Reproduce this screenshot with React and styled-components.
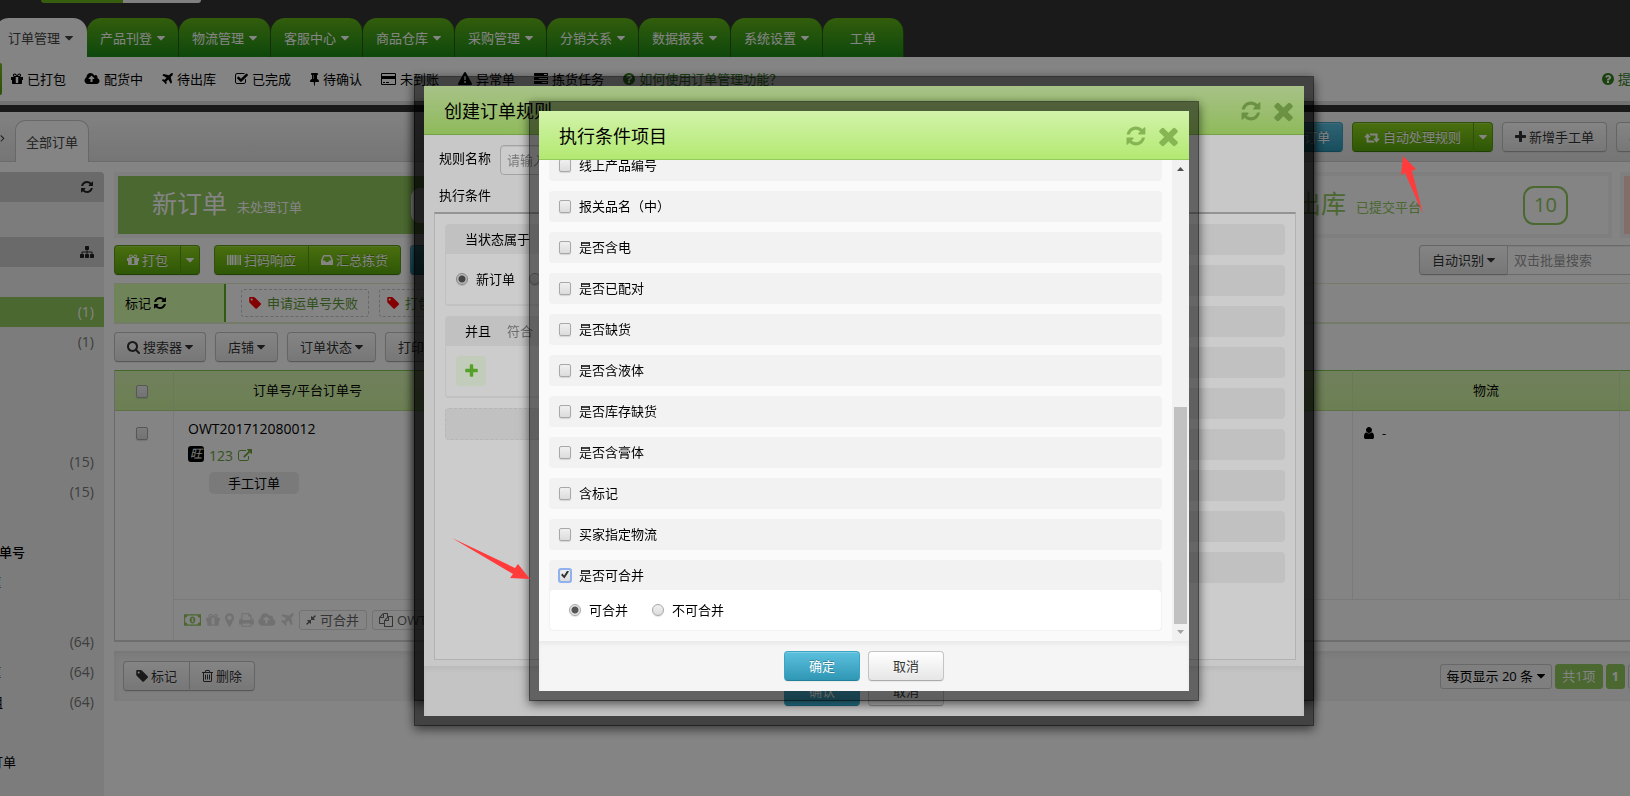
import React, { useState } from "react";
import styled, { createGlobalStyle, css } from 'styled-components';

// [left edge, advance width, path] on a 1792 high grid
const ICONS = {
  refresh: [128, 1536, "M1511 1056q0 5-1 7-64 268-268 434.5t-478 166.5q-146 0-282.5-55t-243.5-157l-129 129q-19 19-45 19t-45-19-19-45v-448q0-26 19-45t45-19h448q26 0 45 19t19 45-19 45l-137 137q71 66 161 102t187 36q134 0 250-65t186-179q11-17 53-117 8-23 30-23h192q13 0 22.5 9.5t9.5 22.5zm25-800v448q0 26-19 45t-45 19h-448q-26 0-45-19t-19-45 19-45l138-138q-148-137-349-137-134 0-250 65t-186 179q-11 17-53 117-8 23-30 23h-199q-13 0-22.5-9.5t-9.5-22.5v-7q65-268 270-434.5t480-166.5q146 0 284 55.5t245 156.5l130-129q19-19 45-19t45 19 19 45z"],
  times: [302, 1188, "M1490 1322q0 40-28 68l-136 136q-28 28-68 28t-68-28l-294-294-294 294q-28 28-68 28t-68-28l-136-136q-28-28-28-68t28-68l294-294-294-294q-28-28-28-68t28-68l136-136q28-28 68-28t68 28l294 294 294-294q28-28 68-28t68 28l136 136q28 28 28 68t-28 68l-294 294 294 294q28 28 28 68z"],
  plus: [192, 1408, "M1600 736v192q0 40-28 68t-68 28h-416v416q0 40-28 68t-68 28h-192q-40 0-68-28t-28-68v-416h-416q-40 0-68-28t-28-68v-192q0-40 28-68t68-28h416v-416q0-40 28-68t68-28h192q40 0 68 28t28 68v416h416q40 0 68 28t28 68z"],
  tag: [100, 1544, "M576 448q0-53-37.5-90.5t-90.5-37.5-90.5 37.5-37.5 90.5 37.5 90.5 90.5 37.5 90.5-37.5 37.5-90.5zm1067 576q0 53-37 90l-491 492q-39 37-91 37-53 0-90-37l-715-716q-38-37-64.5-101t-26.5-117v-416q0-52 38-90t90-38h416q53 0 117 26.5t102 64.5l715 714q37 39 37 91z"],
  caret: [384, 1024, "M1408 704q0 26-19 45l-448 448q-19 19-45 19t-45-19l-448-448q-19-19-19-45t19-45 45-19h896q26 0 45 19t19 45z"],
  cloud: [0, 1920, "M1216 864q0-14-9-23l-352-352q-9-9-23-9t-23 9l-351 351q-10 12-10 24 0 14 9 23t23 9h224v352q0 13 9.5 22.5t22.5 9.5h192q13 0 22.5-9.5t9.5-22.5v-352h224q13 0 22.5-9.5t9.5-22.5zm640 288q0 159-112.5 271.5t-271.5 112.5h-1088q-185 0-316.5-131.5t-131.5-316.5q0-130 70-240t188-165q-2-30-2-43 0-212 150-362t362-150q156 0 285.5 87t188.5 231q71-62 166-62 106 0 181 75t75 181q0 76-41 138 130 31 213.5 135.5t83.5 238.5z"],
  plane: [192, 1408, "M1568 160q44 52 12 148t-108 172l-161 161 160 696q5 19-12 33l-128 96q-7 6-19 6-4 0-7-1-15-3-21-16l-279-508-259 259 53 194q5 17-8 31l-96 96q-9 9-23 9h-2q-15-2-24-13l-189-252-252-189q-11-7-13-23-1-13 9-25l96-97q9-9 23-9 6 0 8 1l194 53 259-259-508-279q-14-8-17-24-2-16 9-27l128-128q14-13 30-8l665 159 160-160q76-76 172-108t148 12z"],
  pin: [320, 1152, "M800 864v-448q0-14-9-23t-23-9-23 9-9 23v448q0 14 9 23t23 9 23-9 9-23zm672 352q0 26-19 45t-45 19h-429l-51 483q-2 12-10.5 20.5t-20.5 8.5h-1q-27 0-32-27l-76-485h-404q-26 0-45-19t-19-45q0-123 78.5-221.5t177.5-98.5v-512q-52 0-90-38t-38-90 38-90 90-38h640q52 0 90 38t38 90-38 90-90 38v512q99 0 177.5 98.5t78.5 221.5z"],
  check: [64, 1664, "M1472 930v318q0 119-84.5 203.5t-203.5 84.5h-832q-119 0-203.5-84.5t-84.5-203.5v-832q0-119 84.5-203.5t203.5-84.5h832q63 0 117 25 15 7 18 23 3 17-9 29l-49 49q-10 10-23 10-3 0-9-2-23-6-45-6h-832q-66 0-113 47t-47 113v832q0 66 47 113t113 47h832q66 0 113-47t47-113v-254q0-13 9-22l64-64q10-10 23-10 6 0 12 3 20 8 20 29zm231-489l-814 814q-24 24-57 24t-57-24l-430-430q-24-24-24-57t24-57l110-110q24-24 57-24t57 24l263 263 647-647q24-24 57-24t57 24l110 110q24 24 24 57t-24 57z"],
  card: [0, 1920, "M1760 128q66 0 113 47t47 113v1216q0 66-47 113t-113 47h-1600q-66 0-113-47t-47-113v-1216q0-66 47-113t113-47h1600zm-1600 128q-13 0-22.5 9.5t-9.5 22.5v224h1664v-224q0-13-9.5-22.5t-22.5-9.5h-1600zm1600 1280q13 0 22.5-9.5t9.5-22.5v-608h-1664v608q0 13 9.5 22.5t22.5 9.5h1600zm-1504-128v-128h256v128h-256zm384 0v-128h384v128h-384z"],
  warning: [0, 1792, "M1024 1375v-190q0-14-9.5-23.5t-22.5-9.5h-192q-13 0-22.5 9.5t-9.5 23.5v190q0 14 9.5 23.5t22.5 9.5h192q13 0 22.5-9.5t9.5-23.5zm-2-374l18-459q0-12-10-19-13-11-24-11h-220q-11 0-24 11-10 7-10 21l17 457q0 10 10 16.5t24 6.5h185q14 0 23.5-6.5t10.5-16.5zm-14-934l768 1408q35 63-2 126-17 29-46.5 46t-63.5 17h-1536q-34 0-63.5-17t-46.5-46q-37-63-2-126l768-1408q17-31 47-49t65-18 65 18 47 49z"],
  tasks: [0, 1792, "M1024 1408h640v-128h-640v128zm-384-512h1024v-128h-1024v128zm640-512h384v-128h-384v128zm512 832v256q0 26-19 45t-45 19h-1664q-26 0-45-19t-19-45v-256q0-26 19-45t45-19h1664q26 0 45 19t19 45zm0-512v256q0 26-19 45t-45 19h-1664q-26 0-45-19t-19-45v-256q0-26 19-45t45-19h1664q26 0 45 19t19 45zm0-512v256q0 26-19 45t-45 19h-1664q-26 0-45-19t-19-45v-256q0-26 19-45t45-19h1664q26 0 45 19t19 45z"],
  question: [128, 1536, "M1024 1376v-192q0-14-9-23t-23-9h-192q-14 0-23 9t-9 23v192q0 14 9 23t23 9h192q14 0 23-9t9-23zm256-672q0-88-55.5-163t-138.5-116-170-41q-243 0-371 213-15 24 8 42l132 100q7 6 19 6 16 0 25-12 53-68 86-92 34-24 86-24 48 0 85.5 26t37.5 59q0 38-20 61t-68 45q-63 28-115.5 86.5t-52.5 125.5v36q0 14 9 23t23 9h192q14 0 23-9t9-23q0-19 21.5-49.5t54.5-49.5q32-18 49-28.5t46-35 44.5-48 28-60.5 12.5-81zm384 192q0 209-103 385.5t-279.5 279.5-385.5 103-385.5-103-279.5-279.5-103-385.5 103-385.5 279.5-279.5 385.5-103 385.5 103 279.5 279.5 103 385.5z"],
  gift: [128, 1536, "M1056 1356v-716h-320v716q0 25 18 38.5t46 13.5h192q28 0 46-13.5t18-38.5zm-456-844h195l-126-161q-26-31-69-31-40 0-68 28t-28 68 28 68 68 28zm688-96q0-40-28-68t-68-28q-43 0-69 31l-125 161h194q40 0 68-28t28-68zm376 256v320q0 14-9 23t-23 9h-96v416q0 40-28 68t-68 28h-1088q-40 0-68-28t-28-68v-416h-96q-14 0-23-9t-9-23v-320q0-14 9-23t23-9h440q-93 0-158.5-65.5t-65.5-158.5 65.5-158.5 158.5-65.5q107 0 168 77l128 165 128-165q61-77 168-77 93 0 158.5 65.5t65.5 158.5-65.5 158.5-158.5 65.5h440q14 0 23 9t9 23z"],
  retweet: [0, 1920, "M1216 1568q0 13-9.5 22.5t-22.5 9.5h-960q-8 0-13.5-2t-9-7-5.5-8-3-11.5-1-11.5v-600h-192q-26 0-45-19t-19-45q0-24 15-41l320-384q19-22 49-22t49 22l320 384q15 17 15 41 0 26-19 45t-45 19h-192v384h576q16 0 25 11l160 192q7 10 7 21zm640-416q0 24-15 41l-320 384q-20 23-49 23t-49-23l-320-384q-15-17-15-41 0-26 19-45t45-19h192v-384h-576q-16 0-25-12l-160-192q-7-9-7-20 0-13 9.5-22.5t22.5-9.5h960q8 0 13.5 2t9 7 5.5 8 3 11.5 1 11.5v600h192q26 0 45 19t19 45z"],
  search: [64, 1664, "M1216 832q0-185-131.5-316.5t-316.5-131.5-316.5 131.5-131.5 316.5 131.5 316.5 316.5 131.5 316.5-131.5 131.5-316.5zm512 832q0 52-38 90t-90 38q-54 0-90-38l-343-342q-179 124-399 124-143 0-273.5-55.5t-225-150-150-225-55.5-273.5 55.5-273.5 150-225 225-150 273.5-55.5 273.5 55.5 225 150 150 225 55.5 273.5q0 220-124 399l343 343q37 37 37 90z"],
  sitemap: [0, 1792, "M1792 1248v320q0 40-28 68t-68 28h-320q-40 0-68-28t-28-68v-320q0-40 28-68t68-28h96v-192h-512v192h96q40 0 68 28t28 68v320q0 40-28 68t-68 28h-320q-40 0-68-28t-28-68v-320q0-40 28-68t68-28h96v-192h-512v192h96q40 0 68 28t28 68v320q0 40-28 68t-68 28h-320q-40 0-68-28t-28-68v-320q0-40 28-68t68-28h96v-192q0-52 38-90t90-38h512v-192h-96q-40 0-68-28t-28-68v-320q0-40 28-68t68-28h320q40 0 68 28t28 68v320q0 40-28 68t-68 28h-96v192h512q52 0 90 38t38 90v192h96q40 0 68 28t28 68z"],
  user: [256, 1280, "M1536 1399q0 109-62.5 187t-150.5 78h-854q-88 0-150.5-78t-62.5-187q0-85 8.5-160.5t31.5-152 58.5-131 94-89 134.5-34.5q131 128 313 128t313-128q76 0 134.5 34.5t94 89 58.5 131 31.5 152 8.5 160.5zm-256-887q0 159-112.5 271.5t-271.5 112.5-271.5-112.5-112.5-271.5 112.5-271.5 271.5-112.5 271.5 112.5 112.5 271.5z"],
  marker: [384, 1024, "M1152 640q0-106-75-181t-181-75-181 75-75 181 75 181 181 75 181-75 75-181zm256 0q0 109-33 179l-364 774q-16 33-47.5 52t-67.5 19-67.5-19-46.5-52l-365-774q-33-70-33-179 0-212 150-362t362-150 362 150 150 362z"],
  print: [64, 1664, "M448 1536h896v-256h-896v256zm0-640h896v-384h-160q-40 0-68-28t-28-68v-160h-640v640zm1152 64q0-26-19-45t-45-19-45 19-19 45 19 45 45 19 45-19 19-45zm128 0v416q0 13-9.5 22.5t-22.5 9.5h-224v160q0 40-28 68t-68 28h-960q-40 0-68-28t-28-68v-160h-224q-13 0-22.5-9.5t-9.5-22.5v-416q0-79 56.5-135.5t135.5-56.5h64v-544q0-40 28-68t68-28h672q40 0 88 20t76 48l152 152q28 28 48 76t20 88v256h64q79 0 135.5 56.5t56.5 135.5z"],
  trash: [192, 1408, "M704 736v576q0 14-9 23t-23 9h-64q-14 0-23-9t-9-23v-576q0-14 9-23t23-9h64q14 0 23 9t9 23zm256 0v576q0 14-9 23t-23 9h-64q-14 0-23-9t-9-23v-576q0-14 9-23t23-9h64q14 0 23 9t9 23zm256 0v576q0 14-9 23t-23 9h-64q-14 0-23-9t-9-23v-576q0-14 9-23t23-9h64q14 0 23 9t9 23zm128 724v-948h-896v948q0 22 7 40.5t14.5 27 10.5 8.5h832q3 0 10.5-8.5t14.5-27 7-40.5zm-672-1076h448l-48-117q-7-9-17-11h-317q-10 2-17 11zm928 32v64q0 14-9 23t-23 9h-96v948q0 83-47 143.5t-113 60.5h-832q-66 0-113-58.5t-47-141.5v-952h-96q-14 0-23-9t-9-23v-64q0-14 9-23t23-9h309l70-167q15-37 54-63t79-26h320q40 0 79 26t54 63l70 167h309q14 0 23 9t9 23z"],
  external: [0, 1792, "M1408 928v320q0 119-84.5 203.5t-203.5 84.5h-832q-119 0-203.5-84.5t-84.5-203.5v-832q0-119 84.5-203.5t203.5-84.5h704q14 0 23 9t9 23v64q0 14-9 23t-23 9h-704q-66 0-113 47t-47 113v832q0 66 47 113t113 47h832q66 0 113-47t47-113v-320q0-14 9-23t23-9h64q14 0 23 9t9 23zm384-864v512q0 26-19 45t-45 19-45-19l-176-176-652 652q-10 10-23 10t-23-10l-114-114q-10-10-10-23t10-23l652-652-176-176q-19-19-19-45t19-45 45-19h512q26 0 45 19t19 45z"],
  inbox: [128, 1536, "M1151 960h316q-1-3-2.5-8.5t-2.5-7.5l-212-496h-708l-212 496q-1 3-2.5 8.500t-2.500 7.500h316l95 192h320zm513 30v482q0 26-19 45t-45 19h-1408q-26 0-45-19t-19-45v-482q0-62 25-123l238-552q10-25 36.5-42t52.5-17h832q26 0 52.5 17t36.5 42l238 552q25 61 25 123z"],
  compress: [128, 1536, "M896 960v448q0 26-19 45t-45 19-45-19l-144-144-332 332q-10 10-23 10t-23-10l-114-114q-10-10-10-23t10-23l332-332-144-144q-19-19-19-45t19-45 45-19h448q26 0 45 19t19 45zm755-672q0 13-10 23l-332 332 144 144q19 19 19 45t-19 45-45 19h-448q-26 0-45-19t-19-45v-448q0-26 19-45t45-19 45 19l144 144 332-332q10-10 23-10t23 10l114 114q10 10 10 23z"],
  files: [0, 1792, "M1696 384q40 0 68 28t28 68v1216q0 40-28 68t-68 28h-960q-40 0-68-28t-28-68v-288h-544q-40 0-68-28t-28-68v-672q0-40 20-88t48-76l408-408q28-28 76-48t88-20h416q40 0 68 28t28 68v328q68-40 128-40h416zm-544 213l-299 299h299v-299zm-640-384l-299 299h299v-299zm196 647l316-316v-416h-384v416q0 40-28 68t-68 28h-416v640h512v-256q0-40 20-88t48-76zm956 804v-1152h-384v416q0 40-28 68t-68 28h-416v640h896z"],
  barcode: [0, 1792, "M0 256h128v1280H0zM192 256h128v1280h-128zM384 256h128v1280h-128zM576 256h192v1280H576zM832 256h128v1280H832zM1024 256h128v1280h-128zM1216 256h128v1280h-128zM1408 256h64v1280h-64zM1536 256h64v1280h-64zM1664 256h128v1280h-128z"],
  money: [0, 1920, "M0 256h1920v1280H0zM384 384q0 106-75 181t-181 75v512q106 0 181 75t75 181h1152q0-106 75-181t181-75V640q-106 0-181-75t-75-181zM960 512q140 0 230 112t90 272-90 272-230 112-230-112-90-272 90-272 230-112zM840 1088h272V992h-80V672h-88q-20 50-104 56v78h80v186h-80z"],
  chevron: [500, 780, "M1171 960q0 13-10 23l-466 466q-10 10-23 10t-23-10l-50-50q-10-10-10-23t10-23l393-393-393-393q-10-10-10-23t10-23l50-50q10-10 23-10t23 10l466 466q10 10 10 23z"],
};

function Icon({ name, size = 14 }) {
  const [x, w, d] = ICONS[name];
  return (
    <Svg
      width={Math.round(size * w / 1792)}
      height={size}
      viewBox={`${x} 0 ${w} 1792`}
      aria-hidden="true">
      <path d={d} fillRule="evenodd" />
    </Svg>
  );
}

const GlobalStyle = createGlobalStyle`
  * { box-sizing: border-box; }
  body {
    margin: 0;
    background: #fdfdfd;
    color: #000;
    font: 13px/20px "Open Sans", "Noto Sans CJK SC", sans-serif;
  }
  button, input, select { font: inherit; }
`;

const Svg = styled.svg`
  display: block;
  flex: none;
  fill: currentColor;
  overflow: visible;
`;

const Shell = styled.div`
  height: 100vh;
  overflow: hidden;
`;
const Page = styled.div`
  display: flex;
  flex-direction: column;
  width: calc(100% + 40px);
  min-height: 100vh;
`;

/* ---------- top navigation ---------- */
const TopBar = styled.header`
  height: 57px;
  background: #333;
  display: flex;
  flex-direction: column;
  justify-content: space-between;
`;
const Switcher = styled.div`
  display: flex;
  margin-left: 41px;
  height: 3px;
  width: 160px;
  border-radius: 0 0 5px 5px;
  overflow: hidden;
  background: linear-gradient(90deg, #6ab41e 82px, #f8f8f8 82px);
`;
const Tabs = styled.nav`
  display: flex;
  margin-left: -5px;
`;
const Tab = styled.a`
  display: flex;
  align-items: center;
  justify-content: center;
  gap: 5px;
  height: 39px;
  width: ${p => p.$plain ? '81px' : '92px'};
  border-radius: 14px 14px 0 0;
  border-right: 1px solid ${p => p.$active ? 'transparent' : '#2a5a14'};
  background: ${p => p.$active ? '#fdfdfd' : 'linear-gradient(#62b41a, #1b8a18)'};
  color: ${p => p.$active ? '#444' : '#fff'};
  text-decoration: none;
`;
const SubNav = styled.nav`
  display: flex;
  align-items: center;
  gap: 19px;
  height: 48px;
  padding-right: 40px;
  background: #fdfdfd;
  border-bottom: 4px solid #dedede;
`;
const SubLink = styled.a`
  display: flex;
  align-items: center;
  gap: 4px;
  color: ${p => p.$green ? '#33801c' : '#000'};
  text-decoration: none;
  white-space: nowrap;
`;
const HelpLink = styled(SubLink)`
  margin-left: auto;
  margin-right: -14px;
`;
const SubActive = styled.span`
  width: 2px;
  height: 32px;
  margin-right: -10px;
  border-radius: 0 4px 4px 0;
  background: linear-gradient(#7ab81e, #5c9c12);
`;
const Rule = styled.div`
  height: 7px;
  background: #343434;
`;
const DocBar = styled.div`
  display: flex;
  align-items: flex-end;
  height: 50px;
  border-bottom: 1px solid #cfcfcf;
  background: linear-gradient(#fafafa, #e2e2e2);
`;
const Back = styled.button`
  display: flex;
  align-items: center;
  width: 15px;
  height: 46px;
  padding: 0;
  border: 0;
  background: none;
  color: #222;
`;
const DocTab = styled.a`
  height: 42px;
  margin-bottom: -1px;
  padding: 11px 10px 0;
  border: 1px solid #c8c8c8;
  border-bottom: 0;
  border-radius: 10px 10px 0 0;
  background: #fdfdfd;
  color: #444;
  text-decoration: none;
`;
const DocActions = styled.div`
  display: flex;
  gap: 9px;
  margin: 0 2px 9px auto;
`;

/* ---------- buttons ---------- */
const tones = {
  plain: css`
    color: #333;
    border-color: #c4c4c4 #c4c4c4 #ababab;
    background: linear-gradient(#fff, #e6e6e6);
    text-shadow: 0 1px 1px rgba(255, 255, 255, .75);
  `,
  green: css`
    color: #fff;
    border-color: #5a9a10 #5a9a10 #3f7a08;
    background: linear-gradient(#8fd61f, #5aa80c);
    text-shadow: 0 -1px 0 rgba(0, 0, 0, .25);
  `,
  blue: css`
    color: #fff;
    border-color: #3ba4c4 #3ba4c4 #23809c;
    background: linear-gradient(#5bc0de, #2f96b4);
    text-shadow: 0 -1px 0 rgba(0, 0, 0, .25);
  `,
};
const Button = styled.button`
  display: flex;
  align-items: center;
  justify-content: center;
  gap: 3px;
  flex: none;
  height: 30px;
  min-width: ${p => p.$wide ? '76px' : '0'};
  padding: 0 ${p => p.$slim ? '5px' : '12px'};
  border: 1px solid;
  border-radius: 4px;
  box-shadow: inset 0 1px 0 rgba(255, 255, 255, .2), 0 1px 1px rgba(0, 0, 0, .05);
  white-space: nowrap;
  ${p => tones[p.$tone || 'plain']}
`;
const ButtonGroup = styled.div`
  display: flex;
  flex: none;
  ${Button}:not(:first-child) {
    border-top-left-radius: 0;
    border-bottom-left-radius: 0;
    margin-left: -1px;
  }
  ${Button}:not(:last-child) {
    border-top-right-radius: 0;
    border-bottom-right-radius: 0;
  }
  & + & {
    margin-left: 5px;
  }
`;

const boxLook = css`
  appearance: none;
  flex: none;
  width: 12px;
  height: 13px;
  margin: 0;
  border: 1px solid #a8a8a8;
  background: linear-gradient(#f0f0f0, #dcdcdc);
  box-shadow: 0 1px 1px rgba(0, 0, 0, .12);
`;
const Check = styled.input.attrs({ type: 'checkbox' })`
  ${boxLook}
  position: relative;
  border-radius: 2px;
  &:checked {
    outline: 2px solid #8fb1ee;
    outline-offset: -1px;
  }
  &:checked::after {
    content: '';
    position: absolute;
    inset: 1px 1px 2px;
    background: #333;
    clip-path: polygon(0 55%, 20% 38%, 38% 62%, 78% 0, 100% 14%, 42% 100%);
  }
`;
const Radio = styled.input.attrs({ type: 'radio' })`
  ${boxLook}
  height: 12px;
  border-radius: 50%;
  &:checked {
    background: radial-gradient(circle, #555 0 3px, #e6e6e6 4px);
  }
`;

/* ---------- main area ---------- */
const Main = styled.div`
  display: flex;
  flex: 1;
  gap: 10px;
  padding-top: 10px;
`;
const Sidebar = styled.aside`
  flex: none;
  width: 104px;
  background: #efefef;
  border-top-right-radius: 4px;
  overflow: hidden;
`;
const SideHead = styled.div`
  display: flex;
  align-items: center;
  justify-content: flex-end;
  height: 30px;
  margin-bottom: ${p => p.$gap};
  padding-right: 10px;
  background: #cdcdcd;
  color: #222;
`;
const SideRow = styled.a`
  display: flex;
  align-items: center;
  justify-content: space-between;
  height: 30px;
  padding-right: 10px;
  font-size: 14px;
  color: ${p => p.$active ? '#fff' : '#777'};
  background: ${p => p.$active ? '#90c85c' : 'transparent'};
`;
/* labels run out of the left edge, so only their tail shows */
const SideLabel = styled.span`
  display: flex;
  justify-content: flex-end;
  width: ${p => p.$width}px;
  overflow: hidden;
  white-space: nowrap;
  font-size: 13px;
  font-weight: ${p => p.$bold ? 500 : 400};
  color: #000;
`;
const Content = styled.main`
  flex: 1;
  min-width: 0;
`;
const Stats = styled.div`
  display: grid;
  grid-template-columns: 384px 1fr 1fr 379px 50px;
  gap: 8px;
  margin-bottom: 7px;
`;
const Stat = styled.div`
  display: flex;
  align-items: center;
  height: 66px;
  padding: 0 40px 0 34px;
  border: 4px solid #f5f5f5;
  background: ${p => p.$bg || 'transparent'};
  color: ${p => p.$bg ? '#fff' : '#90c85c'};
  white-space: nowrap;
  overflow: hidden;
`;
const StatTitle = styled.strong`
  margin-right: 10px;
  padding-bottom: 4px;
  font-size: 25px;
  font-weight: 400;
  line-height: 32px;
`;
const StatNote = styled.span`
  padding-top: 4px;
`;
const StatCount = styled.span`
  display: flex;
  align-items: center;
  justify-content: center;
  width: 45px;
  height: 39px;
  margin-left: auto;
  border: 2px solid ${p => p.$solid ? 'transparent' : '#90c85c'};
  border-radius: 11px;
  background: ${p => p.$solid ? '#fff' : 'transparent'};
  background-clip: padding-box;
  color: #90c85c;
  font-size: 20px;
`;
const Toolbar = styled.div`
  display: flex;
  gap: 9px;
  margin-bottom: 8px;
`;
const SearchBox = styled.div`
  display: flex;
  width: 251px;
  margin-left: auto;
  ${Button} {
    border-radius: 4px 0 0 4px;
  }
`;
const TextInput = styled.input`
  flex: ${p => p.$joined ? '1' : 'none'};
  min-width: 0;
  width: ${p => p.$joined ? 'auto' : '220px'};
  height: 30px;
  padding: 0 6px;
  border: 1px solid #ccc;
  border-radius: ${p => p.$joined ? '0 4px 4px 0' : '4px'};
  margin-left: ${p => p.$joined ? '-1px' : '0'};
  background: #fff;
  box-shadow: inset 0 1px 1px rgba(0, 0, 0, .075);
  &::placeholder {
    color: #999;
    opacity: 1;
  }
`;
const TagBar = styled.div`
  display: flex;
  align-items: center;
  height: 41px;
  margin-bottom: 8px;
  border-top: 1px solid #dfeecb;
  border-bottom: 2px solid #dfeecb;
`;
const TagHead = styled.div`
  display: flex;
  align-items: center;
  gap: 4px;
  align-self: stretch;
  width: 112px;
  margin-right: 15px;
  padding-left: 11px;
  background: #d9fdae;
  border-right: 2px solid #5cb02a;
`;
const Chip = styled.a`
  display: flex;
  align-items: center;
  gap: 6px;
  height: 28px;
  margin-right: 10px;
  padding: 0 10px 0 7px;
  border: 1px dashed #c8c8c8;
  border-radius: 3px;
  color: #5e9a35;
  svg {
    color: #f00;
  }
`;

/* ---------- order table ---------- */
const Table = styled.table`
  width: 100%;
  table-layout: fixed;
  border-collapse: separate;
  border-spacing: 0;
  border-left: 1px solid #ccc;
  border-bottom: 2px solid #d4d4d4;
  margin-bottom: 9px;
`;
const Th = styled.th`
  height: 41px;
  padding: ${p => p.$first ? '0 4px 2px 0' : '0 0 1px'};
  border-top: 1px solid #7ec850;
  border-bottom: 1px solid #b4dc88;
  border-left: ${p => p.$first ? '0' : '1px solid #cfe6ae'};
  background: linear-gradient(#daf8b4, #d0f5a0);
  font-weight: 400;
  text-align: center;
  ${Check} {
    vertical-align: middle;
  }
`;
const Td = styled.td`
  height: ${p => p.$foot ? '41px' : '188px'};
  padding: ${p => p.$foot ? '0 10px' : p.$first ? '14px 4px 0 0' : '8px 14px 0'};
  border-left: ${p => p.$first ? '0' : '1px solid #ececec'};
  border-top: ${p => p.$foot ? '1px solid #ececec' : '0'};
  text-align: ${p => p.$first ? 'center' : 'left'};
  vertical-align: top;
`;
const OrderNo = styled.div`
  font-size: 14px;
`;
const OrderRef = styled.div`
  display: flex;
  align-items: center;
  gap: 5px;
  margin-top: 7px;
  color: #6aa53a;
  font-size: 14px;
`;
const Wang = styled.span`
  display: flex;
  align-items: center;
  justify-content: center;
  align-self: flex-start;
  width: 16px;
  height: 16px;
  border-radius: 3px;
  background: #000;
  color: #eee;
  font-size: 12px;
  font-style: italic;
`;
const Kind = styled.span`
  display: inline-block;
  margin: 6px 0 0 21px;
  padding: 1px 19px;
  border-radius: 5px;
  background: #ececec;
`;
const Carrier = styled.div`
  display: flex;
  align-items: center;
  gap: 8px;
  padding-top: 4px;
  margin-left: -3px;
`;
const FootRow = styled.div`
  display: flex;
  align-items: center;
  gap: 5px;
  height: 40px;
  color: #dadada;
`;
const Paid = styled.span`
  color: #90c85c;
`;
const MiniButton = styled.button`
  display: flex;
  align-items: center;
  gap: 4px;
  height: 20px;
  padding: 0 7px 0 6px;
  border: 1px solid #dcdcdc;
  border-radius: 3px;
  background: transparent;
  color: #666;
`;
const FootBar = styled.div`
  display: flex;
  align-items: center;
  gap: 3px;
  height: 50px;
  padding: 0 12px 0 9px;
  background: #f4f4f4;
  box-shadow: inset 0 3px 6px rgba(0, 0, 0, .06);
  ${ButtonGroup} {
    margin-right: auto;
  }
`;
const Pager = styled.button`
  display: flex;
  align-items: center;
  gap: 4px;
  height: 25px;
  min-width: ${p => p.$next ? '30px' : '0'};
  padding: 0 ${p => p.$current ? '5px' : '6px'};
  border: 1px solid ${p => p.$green ? '#90c85c' : '#c8c8c8'};
  border-radius: 3px;
  background: ${p => p.$green ? '#90c85c' : 'transparent'};
  color: ${p => p.$green ? '#fff' : '#000'};
  font-weight: ${p => p.$current ? 700 : 400};
`;

/* ---------- dialogs ---------- */
const Layer = styled.div`
  position: fixed;
  inset: 0;
  display: flex;
  align-items: center;
  justify-content: center;
  padding: 6px 0 0 98px;
  background: ${p => p.$dim ? `rgba(0, 0, 0, ${p.$dim})` : 'transparent'};
`;
const Dialog = styled.section`
  display: flex;
  flex-direction: column;
  flex: none;
  width: ${p => p.$width};
  height: ${p => p.$height};
  border: 10px solid rgba(0, 0, 0, .5);
  background: #fafafa;
  background-clip: padding-box;
  box-shadow: 0 3px 10px rgba(0, 0, 0, .6);
`;
const DialogHead = styled.header`
  display: flex;
  align-items: center;
  gap: 12px;
  flex: none;
  height: 49px;
  padding: 1px 11px 0 20px;
  border-bottom: 1px solid #93cb5c;
  background: linear-gradient(#d2f3aa, #b3e972);
`;
const DialogTitle = styled.h2`
  margin: 0 auto 0 0;
  font-size: 18px;
  font-weight: 400;
`;
const HeadButton = styled.button`
  padding: 0;
  border: 0;
  background: none;
  color: #86b653;
`;
const DialogFoot = styled.footer`
  display: flex;
  flex: none;
  justify-content: center;
  gap: 8px;
  height: 50px;
  padding-top: 10px;
  background: #f5f5f5;
  box-shadow: inset 0 3px 4px rgba(0, 0, 0, .05);
`;
const RuleBody = styled.div`
  display: flex;
  flex-direction: column;
  flex: 1;
  padding: 10px 8px 6px 10px;
`;
const NameField = styled.label`
  display: flex;
  gap: 9px;
  padding: 0 5px;
  span {
    padding-top: 3px;
  }
`;
const Caption = styled.div`
  padding: 10px 5px 7px;
`;
const RuleBox = styled.div`
  display: grid;
  grid-template-columns: 1fr 1fr;
  gap: 10px;
  flex: 1;
  padding: 10px;
  border: 1px solid #dfdfdf;
  border-top: 2px solid #b9b9b9;
  background: #fff;
`;
const Column = styled.div`
  display: flex;
  flex-direction: column;
  gap: 10px;
`;
const Panel = styled.div`
  border: 1px solid #f2f2f2;
  border-bottom-width: 2px;
  border-radius: 4px;
`;
const PanelHead = styled.div`
  display: flex;
  gap: 16px;
  height: 29px;
  padding: 4px 19px;
  background: #f2f2f2;
  small {
    font-size: 13px;
    color: #888;
  }
`;
const PanelBody = styled.div`
  display: flex;
  align-items: center;
  height: 50px;
  padding: 0 10px;
  gap: 14px;
`;
const AddButton = styled.button`
  display: flex;
  align-items: center;
  justify-content: center;
  width: 30px;
  height: 30px;
  padding: 0;
  border: 0;
  border-radius: 4px;
  background: #f3ffe9;
  color: #6bc933;
`;
const DropZone = styled.div`
  height: 32px;
  border: 1px dashed #e4e4e4;
  border-radius: 4px;
  background: #f2f2f2;
`;
const Bar = styled.div`
  height: 31px;
  border-radius: 4px;
  background: #f2f2f2;
`;
const ScrollArea = styled.div`
  display: flex;
  flex: 1;
  min-height: 0;
`;
/* list is scrolled to its end */
const ConditionList = styled.div`
  display: flex;
  flex: 1;
  flex-direction: column;
  justify-content: flex-end;
  gap: 10px;
  padding: 0 10px;
  overflow: hidden;
  margin-bottom: 10px;
`;
const Condition = styled.div`
  flex: none;
  padding-bottom: 1px;
  border-radius: 4px;
  background: #f2f2f2;
`;
const ConditionLabel = styled.label`
  display: flex;
  align-items: center;
  gap: 8px;
  height: 30px;
  padding-left: 10px;
`;
const Options = styled.div`
  display: flex;
  gap: 24px;
  height: 40px;
  margin: 0 1px;
  padding: 0 19px;
  border-radius: 4px;
  background: #fff;
`;
const Option = styled.label`
  display: flex;
  align-items: center;
  gap: 8px;
`;
const ScrollBar = styled.div`
  display: flex;
  flex-direction: column;
  justify-content: space-between;
  align-items: center;
  width: 17px;
  padding: 7px 0;
  background: #f1f1f1;
`;
const Thumb = styled.div`
  width: 13px;
  height: 217px;
  margin: auto 0 6px;
  background: #c1c1c1;
`;
const Arrow = styled.svg`
  position: fixed;
  left: ${p => p.$x}px;
  top: ${p => p.$y}px;
  fill: #ff3b3b;
  pointer-events: none;
`;

const tabs = ['订单管理', '产品刊登', '物流管理', '客服中心', '商品仓库', '采购管理', '分销关系', '数据报表', '系统设置'];

const subLinks = [
  ['gift', '已打包'],
  ['cloud', '配货中'],
  ['plane', '待出库'],
  ['check', '已完成'],
  ['pin', '待确认'],
  ['card', '未到账'],
  ['warning', '异常单'],
  ['tasks', '拣货任务'],
];

const sideRows = [
  { count: 1, active: true },
  { count: 1 },
  {},
  {},
  {},
  { count: 15 },
  { count: 15 },
  {},
  { label: '单号', width: 25, bold: true },
  { label: '框', width: 1 },
  {},
  { count: 64 },
  { count: 64, label: '框', width: 1 },
  { count: 64, label: '组', width: 3 },
  {},
  { label: '订单', width: 16 },
];

const conditions = [
  '线上产品编号', '报关品名（中）', '是否含电', '是否已配对', '是否缺货', '是否含液体',
  '是否库存缺货', '是否含膏体', '含标记', '买家指定物流', '是否可合并',
];

function DialogHeader({ title }) {
  return (
    <DialogHead>
      <DialogTitle>{title}</DialogTitle>
      <HeadButton aria-label="刷新"><Icon name="refresh" size={22} /></HeadButton>
      <HeadButton aria-label="关闭"><Icon name="times" size={28} /></HeadButton>
    </DialogHead>
  );
}

function OrderTable() {
  return (
    <Table>
      <colgroup>
        <col width="58" />
        <col width="268" />
        <col />
        <col width="267" />
        <col width="51" />
      </colgroup>
      <thead>
        <tr>
          <Th $first><Check aria-label="全选" /></Th>
          <Th>订单号/平台订单号</Th>
          <Th />
          <Th>物流</Th>
          <Th />
        </tr>
      </thead>
      <tbody>
        <tr>
          <Td $first rowSpan={2}><Check aria-label="选择订单" /></Td>
          <Td>
            <OrderNo>OWT201712080012</OrderNo>
            <OrderRef><Wang>旺</Wang>123<Icon name="external" /></OrderRef>
            <Kind>手工订单</Kind>
          </Td>
          <Td />
          <Td><Carrier><Icon name="user" />-</Carrier></Td>
          <Td />
        </tr>
        <tr>
          <Td $foot colSpan={4}>
            <FootRow>
              <Paid><Icon name="money" size={16} /></Paid>
              <Icon name="gift" size={16} />
              <Icon name="marker" size={16} />
              <Icon name="print" size={16} />
              <Icon name="cloud" size={16} />
              <Icon name="plane" size={16} />
              <MiniButton><Icon name="compress" size={12} />可合并</MiniButton>
              <MiniButton><Icon name="files" />OWT201712080012</MiniButton>
            </FootRow>
          </Td>
        </tr>
      </tbody>
    </Table>
  );
}

export default function App() {
  const [checked, setChecked] = useState({ '是否可合并': true });
  const [merge, setMerge] = useState('yes');

  const toggle = (name) => {
    setChecked({ ...checked, [name]: !checked[name] });
  }

  return (
    <>
      <GlobalStyle />
      <Shell>
        <Page>
          <TopBar>
            <Switcher />
            <Tabs>
              {tabs.map((name, i) =>
                <Tab key={name} $active={i === 0} href="#">{name}<Icon name="caret" /></Tab>
              )}
              <Tab $plain href="#">工单</Tab>
            </Tabs>
          </TopBar>
          <SubNav>
            <SubActive />
            {subLinks.map(([icon, name]) =>
              <SubLink key={name} href="#"><Icon name={icon} />{name}</SubLink>
            )}
            <SubLink $green href="#"><Icon name="question" />如何使用订单管理功能？</SubLink>
            <HelpLink $green href="#"><Icon name="question" />提问</HelpLink>
          </SubNav>
          <Rule />
          <DocBar>
            <Back aria-label="展开"><Icon name="chevron" size={12} /></Back>
            <DocTab href="#">全部订单</DocTab>
            <DocActions>
              <Button $tone="blue">同步订单</Button>
              <ButtonGroup>
                <Button $tone="green"><Icon name="retweet" />自动处理规则</Button>
                <Button $tone="green" $slim aria-label="更多规则"><Icon name="caret" /></Button>
              </ButtonGroup>
              <Button><Icon name="plus" />新增手工单</Button>
              <Button>导出</Button>
            </DocActions>
          </DocBar>

          <Main>
            <Sidebar>
              <SideHead $gap="35px"><Icon name="refresh" /></SideHead>
              <SideHead $gap="30px"><Icon name="sitemap" /></SideHead>
              {sideRows.map((row, i) =>
                <SideRow key={i} $active={row.active}>
                  <SideLabel $width={row.width || 0} $bold={row.bold}>{row.label}</SideLabel>
                  {row.count && <span>({row.count})</span>}
                </SideRow>
              )}
            </Sidebar>

            <Content>
              <Stats>
                <Stat $bg="#90c85c">
                  <StatTitle>新订单</StatTitle>
                  <StatNote>未处理订单</StatNote>
                  <StatCount $solid />
                </Stat>
                <Stat />
                <Stat />
                <Stat>
                  <StatTitle>已出库</StatTitle>
                  <StatNote>已提交平台</StatNote>
                  <StatCount>10</StatCount>
                </Stat>
                <Stat $bg="#ffd0ca" />
              </Stats>

              <Toolbar>
                <ButtonGroup>
                  <Button $tone="green"><Icon name="gift" />打包</Button>
                  <Button $tone="green" $slim aria-label="更多打包"><Icon name="caret" /></Button>
                </ButtonGroup>
                <ButtonGroup>
                  <Button $tone="green"><Icon name="barcode" />扫码响应</Button>
                  <Button $tone="green"><Icon name="inbox" />汇总拣货</Button>
                </ButtonGroup>
                <Button $tone="blue">批量</Button>
                <SearchBox>
                  <Button>自动识别<Icon name="caret" /></Button>
                  <TextInput $joined placeholder="双击批量搜索" aria-label="搜索" />
                </SearchBox>
              </Toolbar>

              <TagBar>
                <TagHead>标记<Icon name="refresh" /></TagHead>
                <Chip><Icon name="tag" />申请运单号失败</Chip>
                <Chip><Icon name="tag" />打包失败</Chip>
              </TagBar>

              <Toolbar>
                <Button><Icon name="search" />搜索器<Icon name="caret" /></Button>
                <Button>店铺<Icon name="caret" /></Button>
                <Button>订单状态<Icon name="caret" /></Button>
                <Button>打印状态<Icon name="caret" /></Button>
              </Toolbar>

              <OrderTable />

              <FootBar>
                <ButtonGroup>
                  <Button><Icon name="tag" />标记</Button>
                  <Button><Icon name="trash" />删除</Button>
                </ButtonGroup>
                <Pager>每页显示 20 条<Icon name="caret" /></Pager>
                <Pager $green>共1项</Pager>
                <Pager $green $current>1</Pager>
                <Pager $next aria-label="下一页" />
              </FootBar>
            </Content>
          </Main>
        </Page>
      </Shell>

      {/* rule list, fully covered by the form above it */}
      <Layer $dim={0.35}>
        <Dialog $width="900px" $height="600px" />
      </Layer>

      <Layer>
        <Dialog $width="900px" $height="650px">
          <DialogHeader title="创建订单规则" />
          <RuleBody>
            <NameField>
              <span>规则名称</span>
              <TextInput placeholder="请输入名称" />
            </NameField>
            <Caption>执行条件</Caption>
            <RuleBox>
              <Column>
                <Panel>
                  <PanelHead>当状态属于</PanelHead>
                  <PanelBody>
                    <Option><Radio name="state" defaultChecked />新订单</Option>
                    <Radio name="state" aria-label="已打包" />
                  </PanelBody>
                </Panel>
                <Panel>
                  <PanelHead>并且<small>符合</small></PanelHead>
                  <PanelBody>
                    <AddButton aria-label="添加条件"><Icon name="plus" size={16} /></AddButton>
                  </PanelBody>
                </Panel>
                <DropZone />
              </Column>
              <Column>
                {Array.from({ length: 9 }, (_, i) => <Bar key={i} />)}
              </Column>
            </RuleBox>
          </RuleBody>
          <DialogFoot>
            <Button $wide $tone="blue">确认</Button>
            <Button $wide>取消</Button>
          </DialogFoot>
        </Dialog>
      </Layer>

      <Layer $dim={0.2}>
        <Dialog $width="670px" $height="600px">
          <DialogHeader title="执行条件项目" />
          <ScrollArea>
            <ConditionList>
              {conditions.map(name =>
                <Condition key={name}>
                  <ConditionLabel>
                    <Check checked={!!checked[name]} onChange={() => toggle(name)} />
                    {name}
                  </ConditionLabel>
                  {name === '是否可合并' && checked[name] &&
                    <Options>
                      <Option>
                        <Radio name="merge" checked={merge === 'yes'} onChange={() => setMerge('yes')} />
                        可合并
                      </Option>
                      <Option>
                        <Radio name="merge" checked={merge === 'no'} onChange={() => setMerge('no')} />
                        不可合并
                      </Option>
                    </Options>
                  }
                </Condition>
              )}
            </ConditionList>
            <ScrollBar>
              <svg width="7" height="4" fill="#505050"><path d="M0 4L3.500 0L7 4z" /></svg>
              <Thumb />
              <svg width="7" height="4" fill="#a3a3a3"><path d="M0 0L3.500 4L7 0z" /></svg>
            </ScrollBar>
          </ScrollArea>
          <DialogFoot>
            <Button $wide $tone="blue">确定</Button>
            <Button $wide>取消</Button>
          </DialogFoot>
        </Dialog>
      </Layer>

      <Arrow $x={452} $y={538} width="78" height="42">
        <path d="M0 0L63 30L66 26L78 41L58 40L61 36Z" />
      </Arrow>
      <Arrow $x={1400} $y={156} width="24" height="60">
        <path d="M3 0L16 13L12 15L23 58L5 17L1 19Z" />
      </Arrow>
    </>
  );
}
